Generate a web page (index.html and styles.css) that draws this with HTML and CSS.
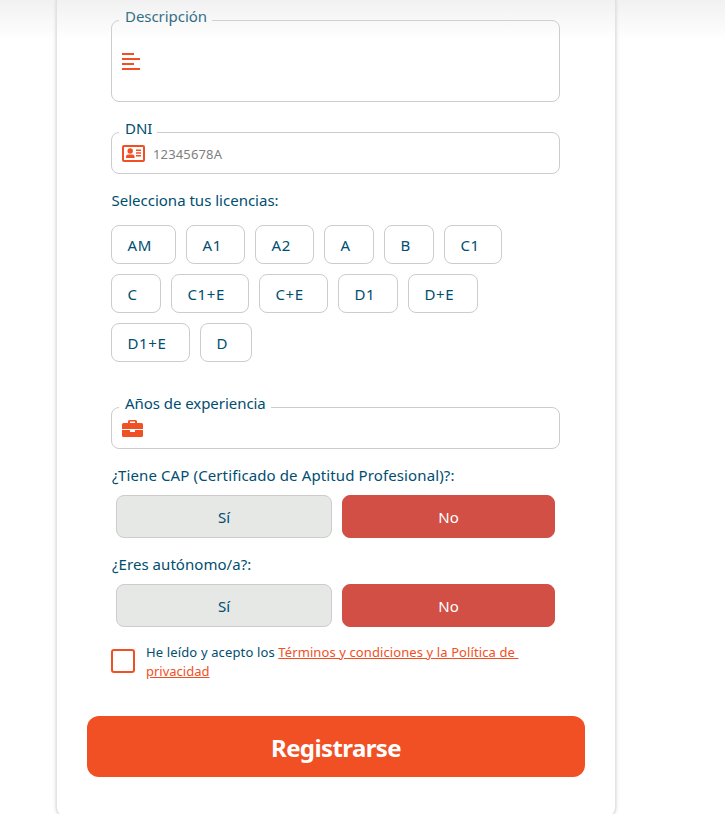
FILE: index.html
```html
<!DOCTYPE html>
<html lang="es">
<head>
<meta charset="utf-8">
<title>Registro</title>
<link rel="stylesheet" href="styles.css">
</head>
<body>
<div class="header-shade"></div>
<form class="card">
  <fieldset class="field field-tall">
    <legend>Descripción</legend>
    <div class="field-row">
      <svg class="icon" width="24" height="20" viewBox="0 0 24 20" fill="#f15025"><path d="M0 1h12v2H0zM0 6h18v2H0zM0 11h12v2H0zM0 16h18v2H0z"/></svg>
    </div>
  </fieldset>
  <fieldset class="field field-dni">
    <legend>DNI</legend>
    <div class="field-row">
      <svg class="icon" width="24" height="20" viewBox="0 0 24 20" fill="#f15025"><rect x="1" y="2" width="21" height="15" rx="1" fill="none" stroke="#f15025" stroke-width="2"/><circle cx="8.200" cy="7" r="2.700"/><path d="M4 14v-1.200q0-2.300 2.400-2.300h3.800q2.400 0 2.400 2.300V14zM14 5.600h5V7h-5zM14 8.300h5v1.400h-5zM14 11h5v1.400h-5z"/></svg>
      <span class="placeholder">12345678A</span>
    </div>
  </fieldset>

  <p class="label">Selecciona tus licencias:</p>
  <div class="chips">
    <span class="chip w65">AM</span><span class="chip w59">A1</span><span class="chip w59">A2</span><span class="chip w50">A</span><span class="chip w50">B</span><span class="chip w58">C1</span>
    <span class="chip w50">C</span><span class="chip w78">C1+E</span><span class="chip w69">C+E</span><span class="chip w60">D1</span><span class="chip w70">D+E</span>
    <span class="chip w79">D1+E</span><span class="chip w52">D</span>
  </div>

  <fieldset class="field field-exp">
    <legend>Años de experiencia</legend>
    <div class="field-row">
      <svg class="icon" width="24" height="20" viewBox="0 0 24 20" fill="#f15025"><path fill-rule="evenodd" d="M6 4V2.500Q6 1 7.500 1h6Q15 1 15 2.500V4h4.500Q21 4 21 5.500V10H0V5.500Q0 4 1.500 4zM8 4h5V2.600H8zM0 11h8v2h5v-2h8v5.500q0 1.500-1.500 1.500h-18Q0 18 0 16.500z"/></svg>
    </div>
  </fieldset>

  <p class="label label-q">¿Tiene CAP (Certificado de Aptitud Profesional)?:</p>
  <div class="choices">
    <button type="button" class="choice">Sí</button>
    <button type="button" class="choice choice-on">No</button>
  </div>
  <p class="label label-q label-short">¿Eres autónomo/a?:</p>
  <div class="choices">
    <button type="button" class="choice">Sí</button>
    <button type="button" class="choice choice-on">No</button>
  </div>

  <div class="terms">
    <span class="check"></span>
    <p class="terms-text">He leído y acepto los <a><span class="link-line">Términos y condiciones y la Política de&nbsp;</span><br>privacidad</a></p>
  </div>
  <button type="button" class="submit">Registrarse</button>
</form>
</body>
</html>
```
FILE: styles.css
```css
* { box-sizing: border-box; }
body {
  margin: 0;
  height: 814px;
  overflow: hidden;
  background: #fff;
  color: #004e70;
  font: 15px/20px "Noto Sans", "Open Sans", sans-serif;
}
.header-shade {
  position: absolute;
  inset: 0 0 auto 0;
  height: 40px;
  background: linear-gradient(rgba(220, 220, 220, .4), rgba(255, 255, 255, 0));
  z-index: 1;
}
.card {
  width: 558px;
  height: 816px;
  margin: 0 0 0 57px;
  padding: 8px 30px 0;
  border-radius: 0 0 8px 8px;
  box-shadow: 0 0 0 1.500px #e4e4e4, 0 0 5px rgba(0, 0, 0, .2);
}
.field {
  width: 449px;
  height: 54px;
  min-width: 0;
  margin: 0 0 0 24px;
  padding: 0 10px;
  border: 1px solid #ccc;
  border-radius: 8px;
}
.field-tall { height: 94px; }
.field-dni { margin-top: 18px; }
.field-exp { margin-top: 33px; }
legend {
  height: 24px;
  margin-left: -3px;
  padding: 0 5px 8px 6px;
  line-height: 16px;
  letter-spacing: -.05px;
  white-space: nowrap;
}
.field-row { display: flex; align-items: center; gap: 7px; height: 20px; }
.field-tall .field-row { height: 60px; }
.icon { flex: none; display: block; }
.placeholder { color: #808080; font-size: 13px; letter-spacing: .15px; }
.label { margin: 16px 0 15px 24.500px; height: 20px; white-space: nowrap; }
.chips { display: flex; flex-wrap: wrap; gap: 10px; width: 449px; margin-left: 24px; }
.chip {
  height: 39px;
  padding-left: 15.500px;
  border: 1px solid #ccc;
  border-radius: 8px;
  line-height: 38px;
  letter-spacing: .6px;
}
.w50 { width: 50px; }
.w52 { width: 52px; }
.w58 { width: 58px; }
.w59 { width: 59px; }
.w60 { width: 60px; }
.w65 { width: 65px; }
.w69 { width: 69px; }
.w70 { width: 70px; }
.w78 { width: 78px; }
.w79 { width: 79px; }
.label-q { margin: 16px 0 10px 25px; letter-spacing: .115px; }
.label-short { letter-spacing: .05px; }
.choices { display: flex; gap: 10px; margin-left: 29px; }
.choice {
  width: 216px;
  height: 43px;
  padding: 0;
  border: 1px solid #ccc;
  border-radius: 8px;
  background: #e5e8e5;
  color: inherit;
  font: inherit;
}
.choice-on { width: 213px; border-color: #d14f45; background: #d14f45; color: #fff; }
.terms { display: flex; gap: 11px; margin: 16px 0 0 24px; height: 38px; }
.check { width: 24px; height: 24px; margin-top: 6px; border: 2px solid #f15025; border-radius: 3px; }
.terms-text { margin: 0; font-size: 13px; line-height: 19px; letter-spacing: .14px; white-space: nowrap; }
a { color: #f15025; text-decoration: underline; letter-spacing: 0; }
.link-line { letter-spacing: .1px; }
.submit {
  display: block;
  width: 498px;
  height: 61px;
  margin-top: 35px;
  padding: 2px 0 0;
  border: 0;
  border-radius: 12px;
  background: #f15025;
  color: #fff;
  font: bold 24px/32px "Noto Sans", sans-serif;
  letter-spacing: -.6px;
}
```
